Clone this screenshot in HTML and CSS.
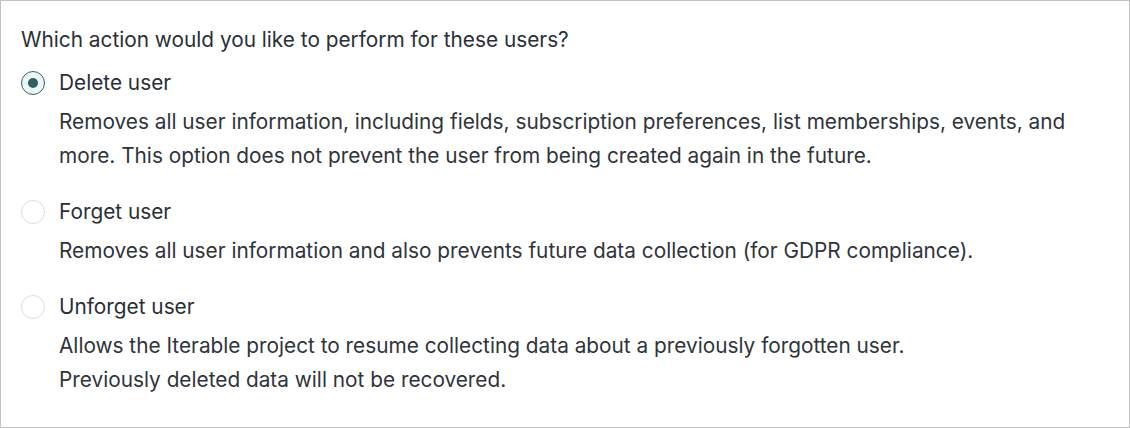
FILE: index.html
```html
<!DOCTYPE html>
<html lang="en">
<head>
<meta charset="utf-8">
<title>User action</title>
<link rel="stylesheet" href="styles.css">
</head>
<body>
<div class="panel">
  <p class="question">Which action would you like to perform for these users?</p>
  <div class="options">
    <label class="option">
      <span class="row">
        <input class="radio" type="radio" name="action" checked>
        <span class="label">Delete user</span>
      </span>
      <span class="desc">Removes all user information, including fields, subscription preferences, list memberships, events, and more. This option does not prevent the user from being created again in the future.</span>
    </label>
    <label class="option">
      <span class="row">
        <input class="radio" type="radio" name="action">
        <span class="label">Forget user</span>
      </span>
      <span class="desc">Removes all user information and also prevents future data collection (for GDPR compliance).</span>
    </label>
    <label class="option">
      <span class="row">
        <input class="radio" type="radio" name="action">
        <span class="label">Unforget user</span>
      </span>
      <span class="desc">Allows the Iterable project to resume collecting data about a previously forgotten user.<br>Previously deleted data will not be recovered.</span>
    </label>
  </div>
</div>
</body>
</html>
```

FILE: styles.css
```css
html, body {
  margin: 0;
  padding: 0;
  background: #ffffff;
}

body {
  font-family: "Inter", "Inter Variable", "Inter Display", sans-serif;
  font-size: 20.8px;
  color: #2a2f37;
}

.panel {
  box-sizing: border-box;
  width: 1130px;
  height: 428px;
  border: 1px solid #c2c2c2;
  padding: 22px 20px 0 20px;
}

.question {
  margin: 0 0 9px 0;
  line-height: 34px;
}

.options {
  display: flex;
  flex-direction: column;
  gap: 22px;
}

.option {
  display: flex;
  flex-direction: column;
  gap: 5px;
  cursor: pointer;
}

.row {
  display: flex;
  align-items: center;
  gap: 14px;
  line-height: 34px;
}

.radio {
  appearance: none;
  -webkit-appearance: none;
  box-sizing: border-box;
  width: 24px;
  height: 24px;
  margin: 0;
  border: 1.5px solid #d9dee2;
  border-radius: 50%;
  background: #ffffff;
  display: grid;
  place-items: center;
  flex: none;
}

.radio:checked {
  border-color: #2f6468;
  background: #eef6f6;
}

.radio:checked::after {
  content: "";
  width: 10px;
  height: 10px;
  border-radius: 50%;
  background: #2e5f63;
}

.desc {
  display: block;
  padding-left: 38px;
  padding-right: 24px;
  line-height: 34px;
  color: #2f343b;
}
```
